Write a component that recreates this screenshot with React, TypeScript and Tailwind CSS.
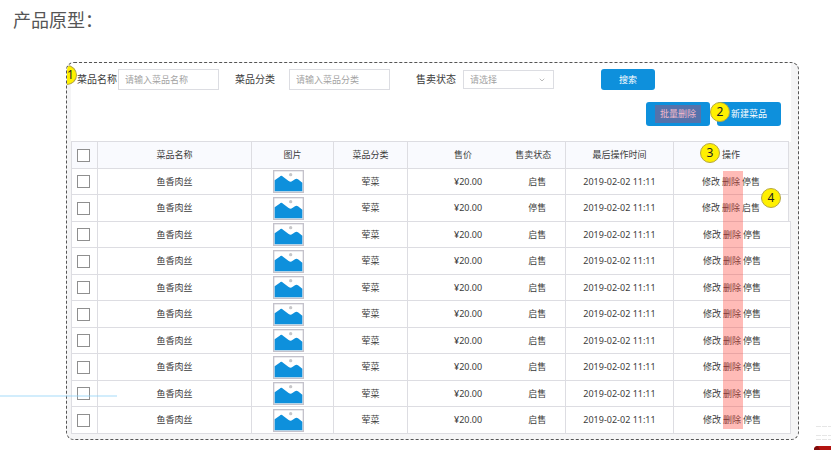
import React from "react";
import { ChevronDown } from "lucide-react";

const dishes = [
  { id: 1, status: "启售", action: "停售" },
  { id: 2, status: "停售", action: "启售" },
  { id: 3, status: "启售", action: "停售" },
  { id: 4, status: "启售", action: "停售" },
  { id: 5, status: "启售", action: "停售" },
  { id: 6, status: "启售", action: "停售" },
  { id: 7, status: "启售", action: "停售" },
  { id: 8, status: "启售", action: "停售" },
  { id: 9, status: "启售", action: "停售" },
  { id: 10, status: "启售", action: "停售" },
];

function Badge({ n, className }: { n: number; className: string }) {
  return (
    <span
      className={`absolute z-10 flex h-5 items-center border border-[#b5a642] bg-[#fff000] text-[12px] leading-none font-normal text-[#222] ${className}`}
    >
      {n}
    </span>
  );
}

function Thumb() {
  return (
    <svg viewBox="0 0 93 69" className="ml-[21px] block h-[23px] w-[31px]" role="img" aria-label="图片">
      <rect x="2" y="2" width="89" height="65" fill="#fff" stroke="#c4c2cb" strokeWidth="4" />
      <path d="M5 31 L20 20 Q25 15 30 20 L47 33 Q53 38 58 33 L66 28 Q70 24 75 28 L88 38 V64 H5 Z" fill="#0e90dc" />
      <circle cx="53" cy="14" r="5" fill="#c6c6c9" />
    </svg>
  );
}

function Check({ label }: { label: string }) {
  return (
    <input
      type="checkbox"
      aria-label={label}
      className="ml-[5px] block h-[13px] w-[13px] appearance-none border border-[#8f8f8f] bg-white"
    />
  );
}

const round = "w-5 justify-center rounded-full";
const inputClass =
  "h-[21px] w-[101px] border border-[#dcdde2] bg-white px-[6px] text-[9px] text-[#666] placeholder:text-[#a3a3a3] outline-none";
const buttonClass = "rounded-[3px] bg-[#0e90dc] text-[9px] text-white";
const line = "border-[#dddde2]";

export default function App() {
  return (
    <div className="relative min-h-screen overflow-hidden bg-white font-['Noto_Sans','Noto_Sans_CJK_SC',sans-serif] text-[#3c3c3c]">
      <h1 className="pt-2 pl-[13px] text-[18px] leading-6 font-normal text-[#555]">产品原型：</h1>

      <div className="relative mt-[30px] mr-8 ml-[66px] overflow-hidden rounded-lg border border-dashed border-[#555] bg-[#f5f5f6] pr-[7px] pb-[5px] pl-1">
        <Badge n={1} className="top-[2px] left-0 w-[10px] rounded-r-full border-l-0" />
        <div className="bg-white">
          <form className="flex items-center pt-[6px] pl-[6px] text-[10px]">
            <label htmlFor="name" className="mr-[1px]">菜品名称</label>
            <input id="name" placeholder="请输入菜品名称" className={inputClass} />
            <label htmlFor="category" className="mr-[14px] ml-4">菜品分类</label>
            <input id="category" placeholder="请输入菜品分类" className={inputClass} />
            <label htmlFor="status" className="mr-[7px] ml-[26px]">售卖状态</label>
            <div className="relative">
              <select
                id="status"
                className="block h-[19px] w-[91px] appearance-none border border-[#dcdde2] bg-white px-[6px] text-[9px] text-[#a3a3a3]"
              >
                <option>请选择</option>
              </select>
              <ChevronDown className="pointer-events-none absolute top-[6px] right-2 h-2 w-2 text-[#999]" />
            </div>
            <button type="button" className={`ml-[47px] h-[21px] w-[54px] ${buttonClass}`}>
              搜索
            </button>
          </form>

          <div className="mt-3 mb-[15px] flex justify-end gap-[7px] pr-[10px]">
            <button type="button" className={`h-6 w-16 ${buttonClass}`}>
              <span className="mx-auto flex h-[18px] w-[46px] items-center justify-center bg-[#5572ab] text-[#f3b9c9]">
                批量删除
              </span>
            </button>
            <button type="button" className={`relative h-6 w-16 ${buttonClass}`}>
              <Badge n={2} className={`top-0 -left-[7px] ${round}`} />
              新建菜品
            </button>
          </div>

          <div className="relative">
            <table className="w-full table-fixed border-collapse text-[9px] leading-3">
              <colgroup>
                <col className="w-[26px]" />
                <col />
                <col className="w-[82px]" />
                <col className="w-[74px]" />
                <col className="w-[94px]" />
                <col className="w-16" />
                <col className="w-[108px]" />
                <col className="w-[115px]" />
                <col className="w-[2px]" />
              </colgroup>
              <thead>
                <tr className="h-[27px] bg-[#f9fafe] *:p-0 *:font-normal">
                  <th className={`border ${line}`}><Check label="全选" /></th>
                  <th className={`border ${line}`}>菜品名称</th>
                  <th className={`border ${line}`}>图片</th>
                  <th className={`border ${line}`}>菜品分类</th>
                  <th className={`border-y ${line} text-left`}><span className="pl-[46px]">售价</span></th>
                  <th className={`border-y ${line}`}>售卖状态</th>
                  <th className={`border ${line}`}>最后操作时间</th>
                  <th className={`relative border ${line}`}>
                    <Badge n={3} className={`top-[1px] left-[26px] ${round}`} />
                    操作
                  </th>
                  <th className="bg-[#f5f5f6]"></th>
                </tr>
              </thead>
              <tbody className="text-center">
                {dishes.map((dish, i) => (
                  <tr key={dish.id} className="odd:h-[26px] even:h-[27px] *:p-0">
                    <td className={`border ${line}`}><Check label={`选择 ${dish.id}`} /></td>
                    <td className={`border ${line}`}>鱼香肉丝</td>
                    <td className={`border ${line}`}><Thumb /></td>
                    <td className={`border ${line}`}>荤菜</td>
                    <td className={`border-y ${line} text-left`}><span className="pl-[46px]">¥20.00</span></td>
                    <td className={`border-y ${line}`}><span className="pl-2">{dish.status}</span></td>
                    <td className={`border ${line}`}>2019-02-02 11:11</td>
                    <td colSpan={i < 2 ? 1 : 2} className={`relative border ${line}`}>
                      <div className="flex justify-center gap-[2px]">
                        <button type="button">修改</button>
                        <button type="button">删除</button>
                        <button type="button">{dish.action}</button>
                      </div>
                      {i === 1 && <Badge n={4} className={`-top-[7px] right-[7px] ${round}`} />}
                    </td>
                    {i < 2 && <td className="bg-[#f5f5f6]"></td>}
                  </tr>
                ))}
              </tbody>
            </table>
            {/* delete column highlight */}
            <div className="pointer-events-none absolute top-[30px] right-12 bottom-[5px] w-5 bg-[#ff3b30]/35" />
          </div>
        </div>
      </div>

      <div className="pointer-events-none absolute bottom-[53px] left-0 h-[2px] w-[117px] bg-[#8fd3f7]/40" />
      <svg viewBox="0 0 20 26" className="absolute right-0 bottom-0 h-[26px] w-5" aria-hidden="true">
        <path d="M5 2.5H20M5 11.5H20M5 15.5H20" stroke="#e6e6e6" strokeWidth="1" strokeDasharray="5 1" />
        <path d="M3 26 Q3 22 7 22 H20 V26 Z" fill="#b3130f" />
        <path d="M3 26 Q3 22 7 22 L9 26 Z" fill="#7d0b0b" />
      </svg>
    </div>
  );
}
